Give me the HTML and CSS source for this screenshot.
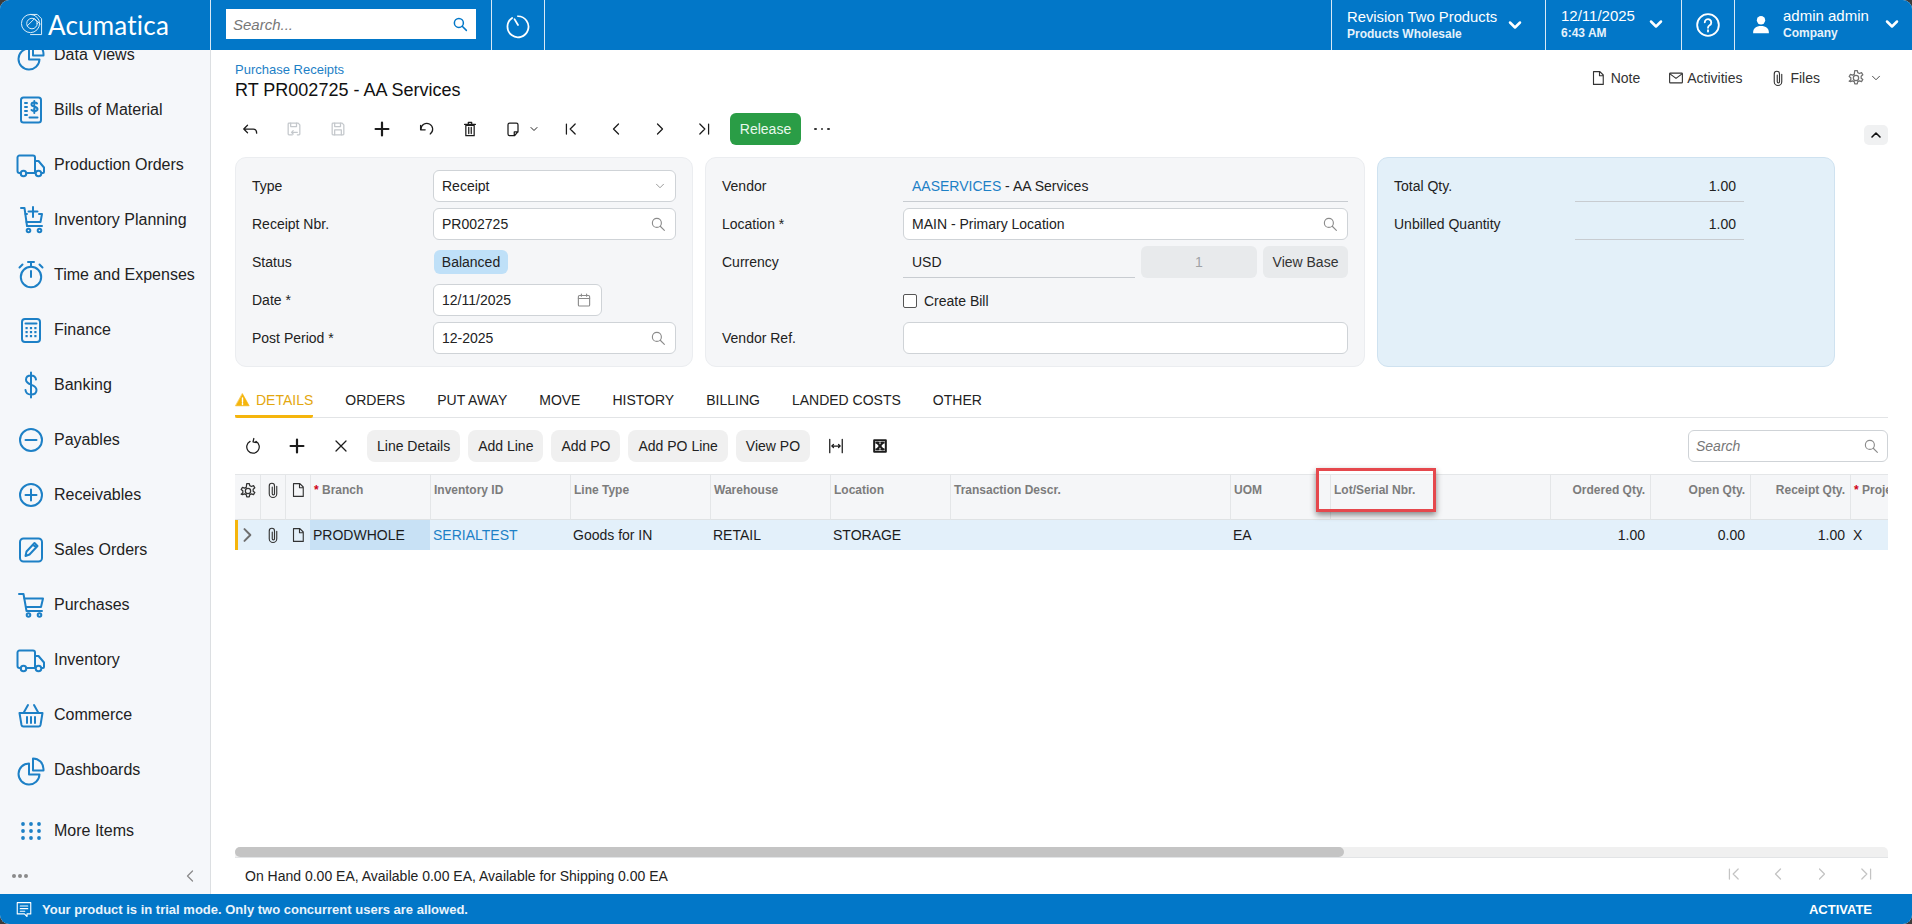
FILE: index.html
```html
<!DOCTYPE html>
<html lang="en">
<head>
<meta charset="utf-8">
<title>Purchase Receipts</title>
<link rel="stylesheet" href="styles.css">
</head>
<body>
<svg class="defs" width="0" height="0" aria-hidden="true">
  <defs>
    <symbol id="s-pie" viewBox="0 0 32 32"><path d="M14 9.500a10.500 10.500 0 1 0 10.500 11H14z"/><path d="M18 4.500v12h10.500V15A10.500 10.500 0 0 0 18 4.500z"/></symbol>
    <symbol id="s-bills" viewBox="0 0 32 32"><rect x="6" y="3.500" width="20" height="25" rx="2.500"/><path d="M10 9h2M10 13h2M10 17h2M10 21h2M14.500 23.500h8"/><path d="M22 9.500c-1-1.200-5.500-1.500-5.500 1 0 2.800 6 1.700 6 4.500 0 2.500-4.500 2.400-6 1M19.300 7v12"/></symbol>
    <symbol id="s-truck" viewBox="0 0 32 32"><path d="M6 24H4.500a2 2 0 0 1-2-2V8.500a2 2 0 0 1 2-2h13.500a2 2 0 0 1 2 2V24h-9"/><path d="M20 12h3.500l5.500 6.500V23a1 1 0 0 1-1 1h-1"/><circle cx="8.500" cy="24.500" r="2.800"/><circle cx="23.500" cy="24.500" r="2.800"/></symbol>
    <symbol id="s-cart-plus" viewBox="0 0 32 32"><path d="M6 4h3.500l2.500 18h15"/><path d="M10.500 10H12M24 10h3l-1.500 8H11.500"/><path d="M18 3v10M13.500 7.500h9"/><circle cx="13.500" cy="26.500" r="1.800"/><circle cx="24.500" cy="26.500" r="1.800"/></symbol>
    <symbol id="s-cart" viewBox="0 0 32 32"><path d="M4 5h4.500l3 17h15.500"/><path d="M9.500 9.500H28l-2 8.500H11"/><circle cx="13.500" cy="26" r="1.800"/><circle cx="24.500" cy="26" r="1.800"/></symbol>
    <symbol id="s-timer" viewBox="0 0 32 32"><circle cx="16" cy="18" r="10.200"/><path d="M13 3h6M16 3v4.500M16 12v6M24.500 5.500l3 3M7.500 5.500l-3 3"/></symbol>
    <symbol id="s-calc" viewBox="0 0 32 32"><rect x="7" y="5" width="18" height="23" rx="3"/><path d="M10.500 9.500h11"/><g class="fill"><rect x="10.500" y="13" width="2.200" height="2.200"/><rect x="14.900" y="13" width="2.200" height="2.200"/><rect x="19.300" y="13" width="2.200" height="2.200"/><rect x="10.500" y="17" width="2.200" height="2.200"/><rect x="14.900" y="17" width="2.200" height="2.200"/><rect x="19.300" y="17" width="2.200" height="2.200"/><rect x="10.500" y="21" width="2.200" height="2.200"/><rect x="14.900" y="21" width="2.200" height="2.200"/><rect x="19.300" y="21" width="2.200" height="2.200"/></g></symbol>
    <symbol id="s-dollar" viewBox="0 0 32 32"><path d="M21 10.500c-.5-3-2.500-4-5-4-3 0-5 1.600-5 4.200 0 6 10.500 3.800 10.500 10.300 0 2.800-2.300 4.500-5.500 4.500s-5.200-1.500-5.500-4.500M16 3.500v25"/></symbol>
    <symbol id="s-minus" viewBox="0 0 32 32"><circle cx="16" cy="16" r="11"/><path d="M10.500 16h11"/></symbol>
    <symbol id="s-plus" viewBox="0 0 32 32"><circle cx="16" cy="16" r="11"/><path d="M10.500 16h11M16 10.500v11"/></symbol>
    <symbol id="s-edit" viewBox="0 0 32 32"><rect x="5" y="4.500" width="22" height="23" rx="3.500"/><path d="M10.500 22l1-4.500 8-8.500 3 3-8 8.500zM18 10.500l3 3"/></symbol>
    <symbol id="s-basket" viewBox="0 0 32 32"><path d="M4.500 14h23l-2 12a2 2 0 0 1-2 1.500H8.500a2 2 0 0 1-2-1.500z"/><path d="M8.500 14L13 6M23.500 14L19 6M12 18v6M16 18v6M20 18v6"/></symbol>
    <symbol id="s-dots" viewBox="0 0 32 32"><g class="fill"><circle cx="8" cy="9" r="1.900"/><circle cx="16" cy="9" r="1.900"/><circle cx="24" cy="9" r="1.900"/><circle cx="8" cy="16" r="1.900"/><circle cx="16" cy="16" r="1.900"/><circle cx="24" cy="16" r="1.900"/><circle cx="8" cy="23" r="1.900"/><circle cx="16" cy="23" r="1.900"/><circle cx="24" cy="23" r="1.900"/></g></symbol>

    <symbol id="t-back" viewBox="0 0 24 24"><path d="M20 17c0-3-1-5-4-5H4.500M9 7.500L4.500 12 9 16.500"/></symbol>
    <symbol id="t-saveback" viewBox="0 0 24 24"><path d="M10 19H6a1 1 0 0 1-1-1V6a1 1 0 0 1 1-1h11l2 2v11a1 1 0 0 1-1 1h-2"/><path d="M8 5v4h7V5M9 16h7M11 14l-2 2 2 2"/></symbol>
    <symbol id="t-save" viewBox="0 0 24 24"><path d="M6 5h11l2 2v11a1 1 0 0 1-1 1H6a1 1 0 0 1-1-1V6a1 1 0 0 1 1-1z"/><path d="M8 5v4h7V5M8 19v-6h8v6"/></symbol>
    <symbol id="t-add" viewBox="0 0 24 24"><path d="M12 5v14M5 12h14"/></symbol>
    <symbol id="t-undo" viewBox="0 0 24 24"><path d="M6 12.500a7 7 0 1 1 11 5.500M5.500 7.500v5.500H11"/></symbol>
    <symbol id="t-trash" viewBox="0 0 24 24"><path d="M7 7.500h10V20H7zM5.500 6.500h13M10 6V4h4v2M10.500 10v7.500M13.500 10v7.500"/></symbol>
    <symbol id="t-copy" viewBox="0 0 24 24"><path d="M8 5h8a2 2 0 0 1 2 2v8l-4 5H8a2 2 0 0 1-2-2V7a2 2 0 0 1 2-2zM13.500 20v-4.500H18"/></symbol>
    <symbol id="t-first" viewBox="0 0 24 24"><path d="M6.500 6v12M17 6l-6 6 6 6"/></symbol>
    <symbol id="t-prev" viewBox="0 0 24 24"><path d="M15 6l-6 6 6 6"/></symbol>
    <symbol id="t-next" viewBox="0 0 24 24"><path d="M9 6l6 6-6 6"/></symbol>
    <symbol id="t-last" viewBox="0 0 24 24"><path d="M17.500 6v12M7 6l6 6-6 6"/></symbol>
    <symbol id="t-chev" viewBox="0 0 24 24"><path d="M6 9l6 6 6-6"/></symbol>
    <symbol id="t-chevup" viewBox="0 0 24 24"><path d="M6 15l6-6 6 6"/></symbol>
    <symbol id="t-search" viewBox="0 0 24 24"><circle cx="10.500" cy="10.500" r="6"/><path d="M15 15l5.500 5.500"/></symbol>
    <symbol id="t-cal" viewBox="0 0 24 24"><rect x="4.500" y="6" width="15" height="14" rx="1.500"/><path d="M4.500 10h15M8.500 4v3M15.500 4v3"/></symbol>
    <symbol id="t-note" viewBox="0 0 24 24"><path d="M6 3.500h8.500L19 8v12.500H6zM14 3.500V9h5"/></symbol>
    <symbol id="t-mail" viewBox="0 0 24 24"><rect x="3.500" y="5.500" width="17" height="13" rx="1"/><path d="M4 6.500l8 6 8-6"/></symbol>
    <symbol id="t-clip" viewBox="0 0 24 24"><path d="M17 7v10a5 5 0 0 1-10 0V6.500a3.500 3.500 0 0 1 7 0V17a1.500 1.500 0 0 1-3 0V8"/></symbol>
    <symbol id="t-gear" viewBox="0 0 24 24"><circle cx="12" cy="12" r="3.200"/><path d="M10.500 3h3l.6 2.600 2 1 2.500-1 1.600 2.600-2 1.600v2.400l2 1.600-1.600 2.600-2.500-1-2 1-.6 2.600h-3l-.6-2.600-2-1-2.500 1L3.800 15.800l2-1.600v-2.400l-2-1.600 1.600-2.600 2.500 1 2-1z"/></symbol>
    <symbol id="t-refresh" viewBox="0 0 24 24"><path d="M15.500 6.500a7.500 7.500 0 1 1-7 0M13 3l-1 4 4 1"/></symbol>
    <symbol id="t-close" viewBox="0 0 24 24"><path d="M6 6l12 12M18 6L6 18"/></symbol>
    <symbol id="t-fit" viewBox="0 0 24 24"><path d="M4.500 4v16M19.500 4v16M7 12h10M9 10l-2 2 2 2M15 10l2 2-2 2"/></symbol>
    <symbol id="t-excel" viewBox="0 0 24 24"><rect x="5" y="5" width="14" height="14"/><path class="heavy" d="M8.500 8l7 8"/><path d="M15.500 8l-7 8M7.500 8h3M13.500 8h3M7.500 16h3M13.500 16h3"/></symbol>
    <symbol id="t-expand" viewBox="0 0 24 24"><path d="M9 5l7 7-7 7"/></symbol>
  </defs>
</svg>

<div class="app">
  <header class="topbar">
    <div class="logo">
      <svg class="logo-mark" viewBox="0 0 24 24"><circle cx="11" cy="11" r="9.500"/><circle cx="12.500" cy="11" r="5.500"/><path d="M11 1.500h7l4.500 4.500v16.500H11M7.500 13.500L15 6l6 5.500"/></svg>
      <span class="logo-text">Acumatica</span>
    </div>
    <div class="top-search">
      <span class="top-search-box"><span>Search...</span><svg class="ic-18 ic-blue"><use href="#t-search"/></svg></span>
    </div>
    <div class="top-clock">
      <svg class="ic-28 ic-white" viewBox="0 0 24 24"><path d="M7 6a9 9 0 1 0 5-1.500M12 12L9 7"/></svg>
    </div>
    <div class="top-spacer"></div>
    <div class="top-cell cell-company">
      <div class="top-stack"><span class="top-main">Revision Two Products</span><span class="top-sub">Products Wholesale</span></div>
      <svg class="ic-20 ic-white ic-top"><use href="#t-chev"/></svg>
    </div>
    <div class="top-cell cell-date">
      <div class="top-stack"><span class="top-main">12/11/2025</span><span class="top-sub">6:43 AM</span></div>
      <svg class="ic-20 ic-white ic-top"><use href="#t-chev"/></svg>
    </div>
    <div class="top-cell cell-help">
      <svg class="ic-26" viewBox="0 0 24 24"><circle cx="12" cy="12" r="10"/><path d="M9 9.500a3 3 0 1 1 4.500 2.700c-1 .6-1.500 1.200-1.500 2.300M12 16.800v1.200"/></svg>
    </div>
    <div class="top-cell cell-user">
      <svg class="ic-user" viewBox="0 0 24 24"><circle cx="12" cy="7.500" r="5"/><path d="M2.500 23c0-6 3.500-8.500 9.500-8.500s9.500 2.500 9.500 8.500z"/></svg>
      <div class="top-stack"><span class="top-main">admin admin</span><span class="top-sub">Company</span></div>
      <svg class="ic-20 ic-white ic-top"><use href="#t-chev"/></svg>
    </div>
  </header>

  <div class="middle">
    <aside class="sidebar">
      <nav class="nav">
        <a class="nav-item"><svg class="nav-ic"><use href="#s-pie"/></svg>Data Views</a>
        <a class="nav-item"><svg class="nav-ic"><use href="#s-bills"/></svg>Bills of Material</a>
        <a class="nav-item"><svg class="nav-ic"><use href="#s-truck"/></svg>Production Orders</a>
        <a class="nav-item"><svg class="nav-ic"><use href="#s-cart-plus"/></svg>Inventory Planning</a>
        <a class="nav-item"><svg class="nav-ic"><use href="#s-timer"/></svg>Time and Expenses</a>
        <a class="nav-item"><svg class="nav-ic"><use href="#s-calc"/></svg>Finance</a>
        <a class="nav-item"><svg class="nav-ic"><use href="#s-dollar"/></svg>Banking</a>
        <a class="nav-item"><svg class="nav-ic"><use href="#s-minus"/></svg>Payables</a>
        <a class="nav-item"><svg class="nav-ic"><use href="#s-plus"/></svg>Receivables</a>
        <a class="nav-item"><svg class="nav-ic"><use href="#s-edit"/></svg>Sales Orders</a>
        <a class="nav-item"><svg class="nav-ic"><use href="#s-cart"/></svg>Purchases</a>
        <a class="nav-item"><svg class="nav-ic"><use href="#s-truck"/></svg>Inventory</a>
        <a class="nav-item"><svg class="nav-ic"><use href="#s-basket"/></svg>Commerce</a>
        <a class="nav-item"><svg class="nav-ic"><use href="#s-pie"/></svg>Dashboards</a>
        <a class="nav-item nav-more"><svg class="nav-ic"><use href="#s-dots"/></svg>More Items</a>
      </nav>
      <div class="side-foot">
        <span class="side-dots"><i></i><i></i><i></i></span>
        <svg class="ic-20 ic-gray"><use href="#t-prev"/></svg>
      </div>
    </aside>

    <main class="main">
      <div class="page-head">
        <div class="page-title">
          <a class="crumb">Purchase Receipts</a>
          <h1>RT PR002725 - AA Services</h1>
        </div>
        <div class="page-actions">
          <span class="act act-note"><svg class="ic-18"><use href="#t-note"/></svg>Note</span>
          <span class="act act-activities"><svg class="ic-18"><use href="#t-mail"/></svg>Activities</span>
          <span class="act act-files"><svg class="ic-18"><use href="#t-clip"/></svg>Files</span>
          <span class="act act-gear"><svg class="ic-20 ic-dim"><use href="#t-gear"/></svg><svg class="ic-14"><use href="#t-chev"/></svg></span>
        </div>
      </div>

      <div class="toolbar">
        <span class="tool"><svg class="ic-20"><use href="#t-back"/></svg></span>
        <span class="tool off"><svg class="ic-20"><use href="#t-saveback"/></svg></span>
        <span class="tool off"><svg class="ic-20"><use href="#t-save"/></svg></span>
        <span class="tool"><svg class="ic-22 ic-heavy"><use href="#t-add"/></svg></span>
        <span class="tool"><svg class="ic-20"><use href="#t-undo"/></svg></span>
        <span class="tool"><svg class="ic-20"><use href="#t-trash"/></svg></span>
        <span class="tool tool-copy"><svg class="ic-20"><use href="#t-copy"/></svg><svg class="ic-12"><use href="#t-chev"/></svg></span>
        <span class="tool"><svg class="ic-20"><use href="#t-first"/></svg></span>
        <span class="tool tool-prev"><svg class="ic-20"><use href="#t-prev"/></svg></span>
        <span class="tool"><svg class="ic-20"><use href="#t-next"/></svg></span>
        <span class="tool"><svg class="ic-20"><use href="#t-last"/></svg></span>
        <button class="btn-release">Release</button>
        <span class="more-dots"><i></i><i></i><i></i></span>
        <span class="collapse"><svg class="ic-16 ic-heavy"><use href="#t-chevup"/></svg></span>
      </div>

      <section class="panels">
        <div class="panel panel-a">
          <label>Type</label>
          <div class="input"><span>Receipt</span><svg class="ic-14 ic-gray"><use href="#t-chev"/></svg></div>
          <label>Receipt Nbr.</label>
          <div class="input"><span>PR002725</span><svg class="ic-18 ic-gray"><use href="#t-search"/></svg></div>
          <label>Status</label>
          <div class="status-cell"><span class="badge">Balanced</span></div>
          <label>Date *</label>
          <div class="input input-date"><span>12/11/2025</span><svg class="ic-18 ic-gray"><use href="#t-cal"/></svg></div>
          <label>Post Period *</label>
          <div class="input"><span>12-2025</span><svg class="ic-18 ic-gray"><use href="#t-search"/></svg></div>
        </div>

        <div class="panel panel-b">
          <label>Vendor</label>
          <div class="line"><a class="link">AASERVICES</a>&nbsp;- AA Services</div>
          <label>Location *</label>
          <div class="input"><span>MAIN - Primary Location</span><svg class="ic-18 ic-gray"><use href="#t-search"/></svg></div>
          <label>Currency</label>
          <div class="currency">
            <div class="line">USD</div>
            <div class="rate">1</div>
            <div class="view-base">View Base</div>
          </div>
          <span></span>
          <div class="check-row"><span class="check"></span>Create Bill</div>
          <label>Vendor Ref.</label>
          <div class="input"></div>
        </div>

        <div class="panel panel-c">
          <label>Total Qty.</label>
          <div class="line line-num">1.00</div>
          <label>Unbilled Quantity</label>
          <div class="line line-num">1.00</div>
        </div>
      </section>

      <div class="tabs">
        <span class="tab active"><svg class="warn" viewBox="0 0 14 14"><path d="M7 .8l6.700 12H.3z"/><path class="warn-mark" d="M7 5v4M7 10.300v1.200"/></svg>DETAILS</span>
        <span class="tab">ORDERS</span>
        <span class="tab">PUT AWAY</span>
        <span class="tab">MOVE</span>
        <span class="tab">HISTORY</span>
        <span class="tab">BILLING</span>
        <span class="tab">LANDED COSTS</span>
        <span class="tab">OTHER</span>
      </div>

      <div class="grid-toolbar">
        <span class="tool"><svg class="ic-20"><use href="#t-refresh"/></svg></span>
        <span class="tool"><svg class="ic-22 ic-heavy"><use href="#t-add"/></svg></span>
        <span class="tool"><svg class="ic-20"><use href="#t-close"/></svg></span>
        <button class="btn first">Line Details</button>
        <button class="btn">Add Line</button>
        <button class="btn">Add PO</button>
        <button class="btn">Add PO Line</button>
        <button class="btn">View PO</button>
        <span class="tool tool-fit"><svg class="ic-20"><use href="#t-fit"/></svg></span>
        <span class="tool"><svg class="ic-20 ic-heavy"><use href="#t-excel"/></svg></span>
        <div class="grid-search"><span>Search</span><svg class="ic-18 ic-gray"><use href="#t-search"/></svg></div>
      </div>

      <div class="grid-wrap">
        <div class="grid">
          <div class="th th-ic"><svg class="ic-20"><use href="#t-gear"/></svg></div>
          <div class="th th-ic"><svg class="ic-18"><use href="#t-clip"/></svg></div>
          <div class="th th-ic"><svg class="ic-18"><use href="#t-note"/></svg></div>
          <div class="th"><b class="req">*</b> Branch</div>
          <div class="th">Inventory ID</div>
          <div class="th">Line Type</div>
          <div class="th">Warehouse</div>
          <div class="th">Location</div>
          <div class="th">Transaction Descr.</div>
          <div class="th">UOM</div>
          <div class="th">Lot/Serial Nbr.</div>
          <div class="th num">Ordered Qty.</div>
          <div class="th num">Open Qty.</div>
          <div class="th num">Receipt Qty.</div>
          <div class="th th-last"><b class="req">*</b> Project</div>

          <div class="td td-ic td-first"><svg class="ic-20 ic-heavy"><use href="#t-expand"/></svg></div>
          <div class="td td-ic"><svg class="ic-18"><use href="#t-clip"/></svg></div>
          <div class="td td-ic"><svg class="ic-18"><use href="#t-note"/></svg></div>
          <div class="td td-sel">PRODWHOLE</div>
          <div class="td"><a class="link">SERIALTEST</a></div>
          <div class="td">Goods for IN</div>
          <div class="td">RETAIL</div>
          <div class="td">STORAGE</div>
          <div class="td"></div>
          <div class="td">EA</div>
          <div class="td"></div>
          <div class="td num">1.00</div>
          <div class="td num">0.00</div>
          <div class="td num">1.00</div>
          <div class="td">X</div>
        </div>
        <span class="highlight"></span>
      </div>

      <div class="scrollbar"><div class="scroll-thumb"></div></div>
      <div class="status-bar">
        <span>On Hand 0.00 EA, Available 0.00 EA, Available for Shipping 0.00 EA</span>
        <div class="pager">
          <svg class="ic-20"><use href="#t-first"/></svg>
          <svg class="ic-20"><use href="#t-prev"/></svg>
          <svg class="ic-20"><use href="#t-next"/></svg>
          <svg class="ic-20"><use href="#t-last"/></svg>
        </div>
      </div>
    </main>
  </div>

  <footer class="trial">
    <svg class="ic-18" viewBox="0 0 24 24"><path d="M3 3.500h18v15h-5v3.500l-3.500-3.500H3z"/><path d="M7 8h10M7 11.500h10M7 15h6"/></svg>
    <span class="trial-text">Your product is in trial mode. Only two concurrent users are allowed.</span>
    <span class="activate">ACTIVATE</span>
  </footer>
</div>
</body>
</html>
```

FILE: styles.css
```css
* { box-sizing: border-box; }
html, body { margin: 0; height: 100%; }
body {
  background: #3c3c3c;
  font-family: "Liberation Sans", Arial, sans-serif;
  font-size: 14px;
  color: #222;
  overflow: hidden;
}
.defs { position: absolute; }
svg { fill: none; stroke: currentColor; stroke-width: 1.500; stroke-linecap: round; stroke-linejoin: round; flex: none; display: block; }
.fill { fill: currentColor; stroke: none; }
.app { height: 924px; display: flex; flex-direction: column; border-radius: 9px; overflow: hidden; background: #fff; }

.ic-12 { width: 12px; height: 12px; color: #222; stroke-width: 2; }
.ic-14 { width: 14px; height: 14px; }
.ic-16 { width: 16px; height: 16px; }
.ic-18 { width: 18px; height: 18px; }
.ic-20 { width: 20px; height: 20px; }
.ic-22 { width: 22px; height: 22px; }
.ic-26 { width: 26px; height: 26px; }
.ic-28 { width: 28px; height: 28px; }
.ic-gray { color: #8b8b8b; }
.ic-dim { color: #707070; }
.ic-blue { color: #0277c8; stroke-width: 2; }
.ic-white { color: #fff; }
.ic-heavy { stroke-width: 2.400; }
.ic-top { stroke-width: 3; }

/* Top bar */
.topbar { height: 50px; flex: none; background: #0277c8; color: #fff; display: flex; align-items: stretch; }
.logo { width: 211px; display: flex; align-items: center; padding-left: 20px; gap: 5px; border-right: 1px solid #d8e9f6; }
.logo-mark { width: 23px; height: 23px; stroke-width: 1; color: #e4f1fa; margin-bottom: 1px; }
.logo-text { font-family: Lato, sans-serif; font-size: 26px; line-height: 30px; letter-spacing: .2px; }
.top-search { width: 281px; padding: 9px 15px 11px; border-right: 1px solid #d8e9f6; }
.top-search-box { display: flex; align-items: center; justify-content: space-between; height: 30px; background: #fff; padding: 0 7px; color: #777; font-style: italic; font-size: 15px; }
.top-clock { width: 53px; border-right: 1px solid #d8e9f6; display: flex; align-items: center; justify-content: center; }
.top-spacer { flex: 1; }
.top-cell { display: flex; align-items: center; border-left: 1px solid #d8e9f6; }
.top-stack { display: flex; flex-direction: column; }
.top-main { font-size: 14px; line-height: 18px; }
.top-sub { font-size: 12px; line-height: 16px; font-weight: bold; color: #e6f2fb; }
.cell-company { width: 214px; padding-left: 15px; gap: 8px; }
.cell-company .top-main { font-size: 14.800px; }
.cell-date { width: 136px; padding-left: 15px; gap: 11px; padding-bottom: 2px; }
.cell-date .top-main { font-size: 15px; }
.cell-help { width: 53px; justify-content: center; padding-bottom: 1px; }
.cell-help .ic-26 { color: #fff; stroke-width: 1.700; }
.cell-user { width: 178px; padding-left: 16px; padding-bottom: 2px; }
.ic-user { width: 20px; height: 22px; fill: #fff; stroke: none; margin-right: 12px; }
.cell-user .top-main { font-size: 15px; }
.cell-user .ic-20 { margin-left: 13px; }

/* Sidebar and main split */
.middle { flex: 1; display: flex; min-height: 0; }
.sidebar { width: 211px; flex: none; background: #f5f7fa; border-right: 1px solid #dcdfe2; display: flex; flex-direction: column; overflow: hidden; }
.nav { flex: 1; margin-top: -23px; }
.nav-item { display: flex; align-items: center; height: 55px; padding-left: 15px; gap: 7px; font-size: 16px; color: #222; }
.nav-more { margin-top: 6px; }
.nav-ic { width: 32px; height: 32px; color: #1d80c6; stroke-width: 2; }
.side-foot { height: 36px; flex: none; display: flex; align-items: center; justify-content: space-between; padding: 0 10px 0 12px; }
.side-dots, .more-dots { display: flex; gap: 2px; }
.side-dots i { width: 4px; height: 4px; border-radius: 50%; background: #8b8b8b; }

.main { flex: 1; min-width: 0; padding: 0 24px 0 24px; display: flex; flex-direction: column; }

/* Page heading */
.page-head { height: 63px; flex: none; display: flex; justify-content: space-between; }
.page-title { padding-top: 13px; }
.crumb { display: block; font-size: 13px; line-height: 14px; color: #1d80c6; }
.page-title h1 { margin: 1px 0 0; font-size: 18px; line-height: 24px; font-weight: normal; color: #111; }
.page-actions { display: flex; align-items: center; height: 56px; padding-right: 5px; }
.act { display: flex; align-items: center; color: #333; gap: 2px; }
.act-note { margin-right: 27px; gap: 4px; }
.act-activities { margin-right: 27px; }
.act-files { margin-right: 26px; gap: 3px; }
.act-gear { gap: 3px; }

/* Toolbars */
.toolbar { height: 32px; flex: none; display: flex; align-items: center; margin-left: -7px; }
.tool { width: 44px; height: 32px; flex: none; display: flex; align-items: center; justify-content: center; color: #1c1c1c; }
.tool.off { color: #c4c8cc; }
.tool-copy { width: 57px; justify-content: flex-start; padding-left: 11px; gap: 5px; }
.tool-prev { margin-left: 1px; }
.btn-release { width: 71px; height: 32px; margin-left: 4px; background: #2a9d46; color: #e9f8ec; border: 0; border-radius: 6px; font: 14px "Liberation Sans", Arial, sans-serif; padding: 0; }
.more-dots { margin-left: 13px; gap: 4px; }
.more-dots i { width: 2.500px; height: 2.500px; border-radius: 50%; background: #333; }
.collapse { margin-left: auto; align-self: flex-end; width: 24px; height: 20px; border-radius: 5px; background: #f0f1f2; display: flex; align-items: center; justify-content: center; color: #111; }

/* Form panels */
.panels { margin-top: 12px; height: 210px; flex: none; display: grid; grid-template-columns: 458px 660px 458px; gap: 12px; }
.panel { background: #f5f6f8; border: 1px solid #ebedf0; border-radius: 11px; padding: 12px 16px 0 16px; display: grid; grid-template-columns: 181px 1fr; grid-auto-rows: 32px; row-gap: 6px; align-items: center; color: #222; }
.panel-c { background: #e3f0f9; border-color: #cfe2f0; grid-template-columns: 181px 169px; }
.input { height: 32px; background: #fff; border: 1px solid #cfd3d7; border-radius: 6px; padding: 0 8px; display: flex; align-items: center; justify-content: space-between; }
.input-date { width: 169px; }
.status-cell { display: flex; align-items: center; }
.badge { height: 24px; width: 74px; margin-left: 1px; background: #bfe0f8; border-radius: 6px; display: flex; align-items: center; justify-content: center; }
.line { height: 32px; border-bottom: 1px solid #c8ccd1; padding-left: 9px; display: flex; align-items: center; flex: 1; }
.line-num { justify-content: flex-end; padding-right: 8px; }
.link { color: #1d80c6; }
.currency { display: flex; gap: 6px; }
.rate { width: 116px; height: 32px; border-radius: 6px; background: #e8eaec; color: #a0a3a6; display: flex; align-items: center; justify-content: center; }
.view-base { width: 85px; height: 32px; border-radius: 6px; background: #e8eaec; color: #333; display: flex; align-items: center; justify-content: center; }
.check-row { display: flex; align-items: center; gap: 7px; padding-top: 2px; }
.check { width: 14px; height: 14px; background: #fff; border: 1px solid #555; border-radius: 2px; }

/* Tabs */
.tabs { margin-top: 16px; height: 35px; flex: none; display: flex; gap: 32px; border-bottom: 1px solid #e2e4e6; }
.tab { height: 35px; display: flex; align-items: center; gap: 6px; padding-bottom: 1px; color: #222; }
.tab.active { color: #e3a70f; border-bottom: 3px solid #f5b50c; border-radius: 0 0 2px 2px; padding-top: 2px; }
.warn { width: 15px; height: 14px; fill: #f5b50c; stroke: #f5b50c; stroke-width: .6; }
.warn .warn-mark { stroke: #fff; stroke-width: 1.400; }

.grid-toolbar { margin-top: 12px; height: 32px; flex: none; display: flex; align-items: center; margin-left: -4px; }
.btn { height: 32px; border: 0; border-radius: 8px; background: #f0f0f0; color: #222; padding: 0 10px; margin-left: 8px; font: 14px "Liberation Sans", Arial, sans-serif; }
.btn.first { margin-left: 4px; }
.tool-fit { margin-left: 4px; }
.grid-search { margin-left: auto; width: 200px; height: 32px; border: 1px solid #cfd3d7; border-radius: 6px; padding: 0 7px; display: flex; align-items: center; justify-content: space-between; color: #777; font-style: italic; }

/* Grid */
.grid-wrap { flex: 1; margin-top: 12px; position: relative; min-height: 0; }
.grid { display: grid; grid-template-columns: 25px 25px 25px 120px 140px 140px 120px 120px 280px 100px 220px 100px 100px 100px 38px; grid-template-rows: 46px 30px; overflow: hidden; }
.th { background: #f5f6f8; border-top: 1px solid #e4e6e8; border-bottom: 1px solid #dfe2e4; border-left: 1px solid #e4e6e8; padding: 8px 5px 0 3px; font-size: 12px; line-height: 14px; font-weight: bold; color: #7c7c7c; white-space: nowrap; overflow: hidden; }
.th:first-child { border-left: 0; }
.th-ic { padding: 6px 0 0; display: flex; justify-content: center; color: #333; align-items: flex-start; }
.th.num { text-align: right; }
.req { color: #d0021b; }
.td { background: #e3f0fa; height: 30px; padding: 0 5px 1px 3px; display: flex; align-items: center; white-space: nowrap; overflow: hidden; color: #1c1c1c; }
.td-ic { justify-content: center; padding: 0; color: #333; }
.td-first { border-left: 3px solid #f5b50c; color: #6f6f6f; padding-right: 4px; }
.td-sel { background: #c8e1f5; }
.td.num { justify-content: flex-end; }
.highlight { position: absolute; left: 1081px; top: -6px; width: 120px; height: 44px; border: 3px solid #e5484d; box-shadow: 0 3px 6px rgba(0, 0, 0, .45); pointer-events: none; }

/* Scrollbar and status */
.scrollbar { height: 11px; flex: none; background: #f0f0f0; border-bottom: 1px solid #e2e4e6; border-radius: 5px 5px 0 0; }
.scroll-thumb { width: 1109px; height: 10px; background: #c4c4c4; border-radius: 5px; }
.status-bar { height: 36px; flex: none; display: flex; align-items: center; justify-content: space-between; padding-left: 10px; }
.pager { display: flex; gap: 24px; padding-right: 12px; color: #c4c4c4; padding-bottom: 4px; }

/* Trial bar */
.trial { height: 30px; flex: none; background: #0277c8; color: #fff; display: flex; align-items: center; padding: 0 40px 0 15px; font-weight: bold; font-size: 13px; }
.trial-text { margin-left: 9px; color: #eaf4fb; }
.activate { margin-left: auto; }
```
